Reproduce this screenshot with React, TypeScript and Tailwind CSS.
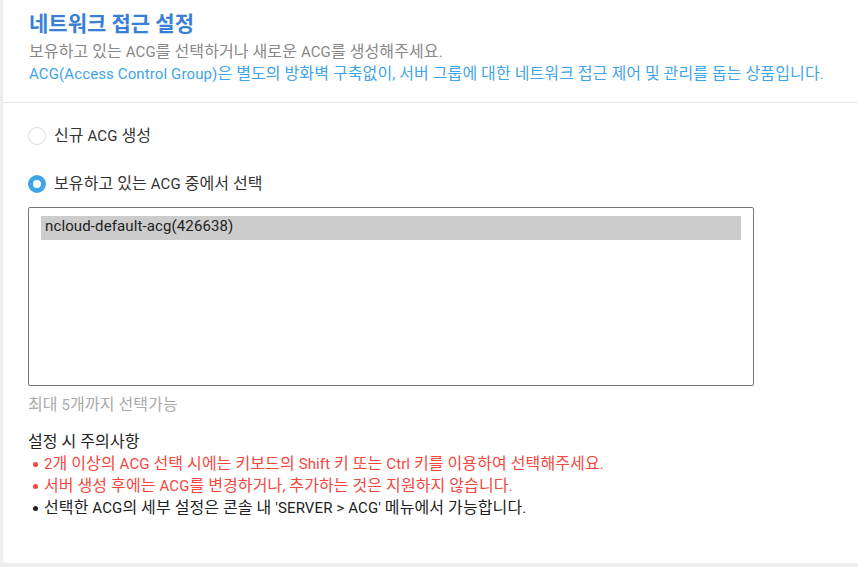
import React from "react";

const font = { fontFamily: 'Roboto, "Noto Sans CJK KR", sans-serif' };

function T({ s }: { s: string }) {
  const parts = s.split(/([\x00-\x7F]+)/).filter((p) => p.length > 0);
  return (
    <>
      {parts.map((p, i) =>
        /^[\x00-\x7F]+$/.test(p) ? (
          <span key={i} className="text-[15px]">
            {p}
          </span>
        ) : (
          <span key={i}>{p}</span>
        )
      )}
    </>
  );
}

function Radio({ checked, label }: { checked?: boolean; label: string }) {
  return (
    <label className="flex items-center gap-[8px] h-[24px]">
      {checked ? (
        <span className="w-[18px] h-[18px] rounded-full border-[5px] border-[#3ea6e8] bg-white box-border" />
      ) : (
        <span className="w-[18px] h-[18px] rounded-full border border-[#dcdcdc] bg-white box-border" />
      )}
      <span className="text-[16px] text-[#333] leading-[22px]">
        <T s={label} />
      </span>
    </label>
  );
}

export default function App() {
  return (
    <div className="w-[858px] h-[567px] bg-[#eeeeee] pl-[3px] pb-[4px] tracking-[0.12px]" style={font}>
      <div className="h-full bg-white rounded-bl-[4px] flex flex-col">
        <div className="pl-[26px] pt-[10px] h-[103px] border-b border-[#e6e6e6]">
          <h1 className="text-[21px] font-bold text-[#3a7fd6] leading-[28px] tracking-normal">네트워크 접근 설정</h1>
          <p className="text-[16px] text-[#888888] leading-[22px] mt-[3px]">
            <T s="보유하고 있는 ACG를 선택하거나 새로운 ACG를 생성해주세요." />
          </p>
          <p className="text-[16px] text-[#3fa5ea] leading-[22px]">
            <T s="ACG(Access Control Group)은 별도의 방화벽 구축없이, 서버 그룹에 대한 네트워크 접근 제어 및 관리를 돕는 상품입니다." />
          </p>
        </div>
        <div className="pl-[25px] pt-[21px]">
          <Radio label="신규 ACG 생성" />
          <div className="h-[24px]" />
          <Radio checked label="보유하고 있는 ACG 중에서 선택" />
          <div className="mt-[11px] w-[726px] h-[179px] border border-[#777777] rounded-[2px] pt-[8px] pl-[12px] pr-[12px]">
            <div className="h-[24px] bg-[#cccccc] text-[15px] text-[#222] leading-[20px] pl-[4px]">
              ncloud-default-acg(426638)
            </div>
          </div>
          <p className="mt-[9px] text-[16px] text-[#aaaaaa] leading-[20px]">
            <T s="최대 5개까지 선택가능" />
          </p>
          <p className="mt-[16px] text-[16px] text-[#222] leading-[22px]">
            <T s="설정 시 주의사항" />
          </p>
          <ul className="text-[16px] leading-[22px]">
            <li className="flex items-center text-[#f4473e]">
              <span className="w-[5px] h-[5px] rounded-full bg-[#f4473e] ml-[5px] mr-[6px]" />
              <span>
                <T s="2개 이상의 ACG 선택 시에는 키보드의 Shift 키 또는 Ctrl 키를 이용하여 선택해주세요." />
              </span>
            </li>
            <li className="flex items-center text-[#f4473e]">
              <span className="w-[5px] h-[5px] rounded-full bg-[#f4473e] ml-[5px] mr-[6px]" />
              <span>
                <T s="서버 생성 후에는 ACG를 변경하거나, 추가하는 것은 지원하지 않습니다." />
              </span>
            </li>
            <li className="flex items-center text-[#222]">
              <span className="w-[5px] h-[5px] rounded-full bg-[#222] ml-[5px] mr-[6px]" />
              <span>
                <T s="선택한 ACG의 세부 설정은 콘솔 내 'SERVER > ACG' 메뉴에서 가능합니다." />
              </span>
            </li>
          </ul>
        </div>
      </div>
    </div>
  );
}
